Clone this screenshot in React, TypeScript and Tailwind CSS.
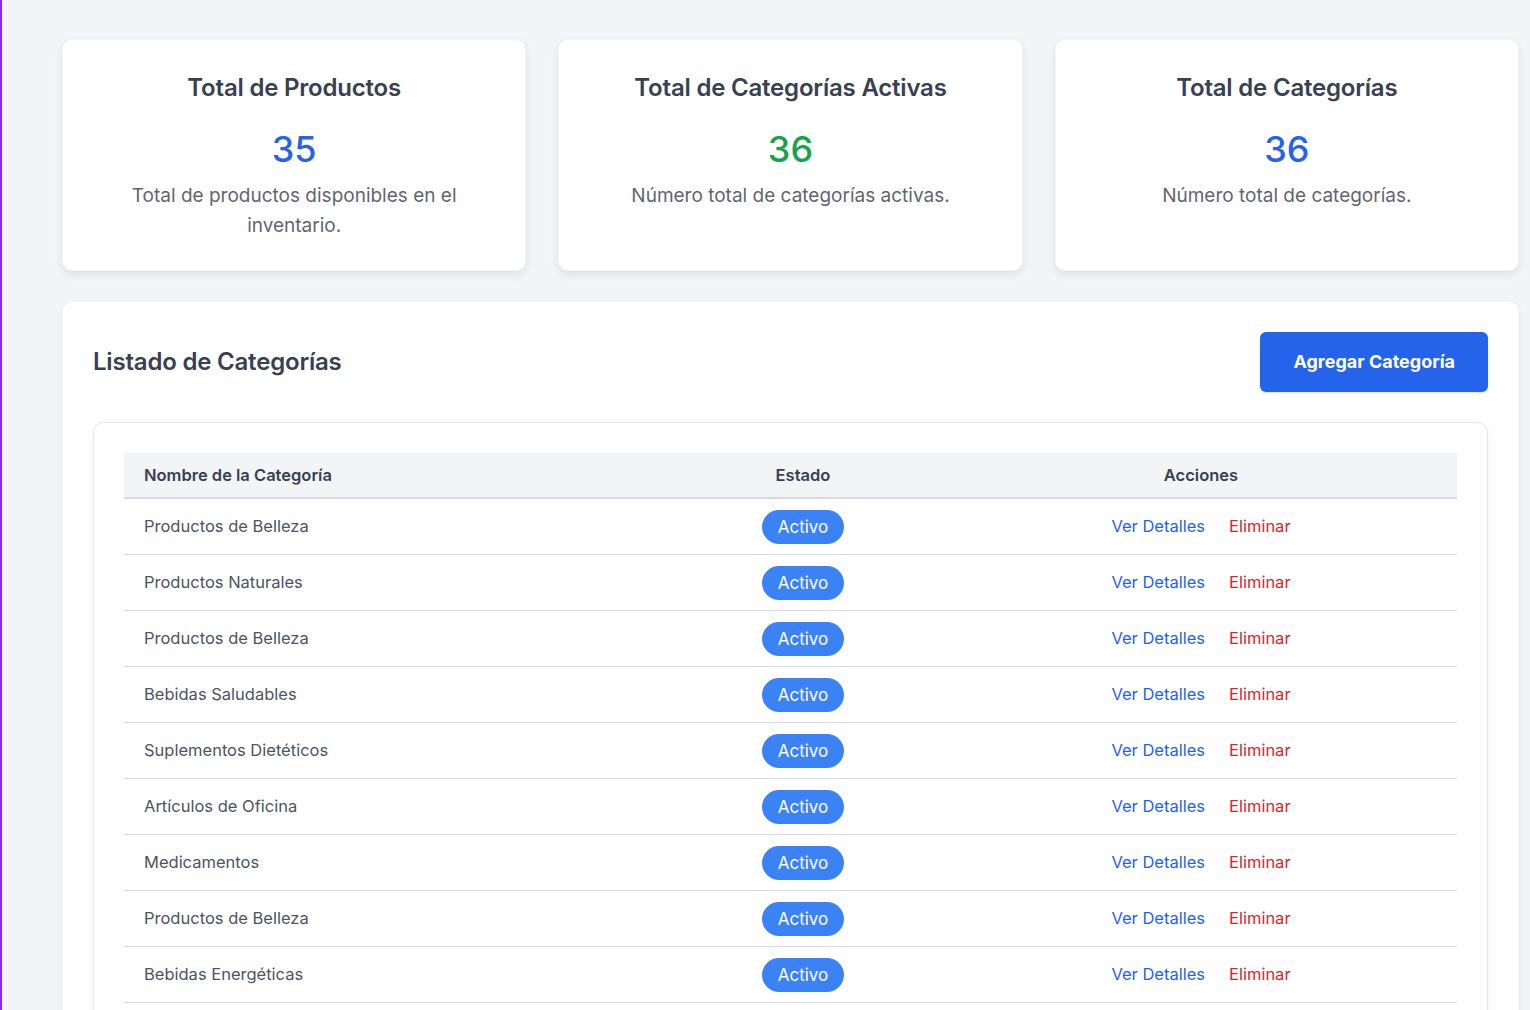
import React from "react";

const rows = [
  "Productos de Belleza",
  "Productos Naturales",
  "Productos de Belleza",
  "Bebidas Saludables",
  "Suplementos Dietéticos",
  "Artículos de Oficina",
  "Medicamentos",
  "Productos de Belleza",
  "Bebidas Energéticas",
];

function StatCard({ title, value, color, desc }: { title: string; value: string; color: string; desc: string }) {
  return (
    <div className="bg-white rounded-[10px] shadow-[0_4px_10px_rgba(0,0,0,0.08)] border border-gray-100 px-[34px] pt-[32px] pb-[29px] text-center">
      <h2 className="text-[24px] leading-[32px] font-semibold text-[#374151] tracking-[-0.2px]">{title}</h2>
      <div className={`mt-[23px] text-[36px] leading-[44px] font-medium ${color}`}>{value}</div>
      <p className="mt-[10px] text-[19px] leading-[30px] text-[#5f6672]">{desc}</p>
    </div>
  );
}

export default function App() {
  return (
    <div
      className="min-h-screen bg-[#f3f4f6] border-l-2 border-[#8a2be2] pl-[60px] pr-[11px] pt-[39px] pb-10"
      style={{ fontFamily: "Inter, 'Noto Sans', sans-serif" }}
    >
      <div className="grid grid-cols-3 gap-[32px]">
        <StatCard title="Total de Productos" value="35" color="text-[#2563eb]" desc="Total de productos disponibles en el inventario." />
        <StatCard title="Total de Categorías Activas" value="36" color="text-[#16a34a]" desc="Número total de categorías activas." />
        <StatCard title="Total de Categorías" value="36" color="text-[#2563eb]" desc="Número total de categorías." />
      </div>

      <div className="mt-[30px] bg-white rounded-[10px] border border-gray-100 shadow-[0_4px_10px_rgba(0,0,0,0.06)] p-[30px]">
        <div className="flex items-center justify-between">
          <h2 className="text-[24px] leading-[32px] font-semibold text-[#374151] tracking-[-0.2px]">Listado de Categorías</h2>
          <button className="bg-[#2563eb] text-white rounded-[6px] px-[33px] py-4 text-[18px] leading-[28px] font-bold shadow-sm">
            Agregar Categoría
          </button>
        </div>

        <div className="mt-[30px] border border-gray-200 rounded-[10px] shadow-[0_4px_12px_rgba(0,0,0,0.05)] p-[30px]">
          <div className="grid grid-cols-[537px_284px_1fr] bg-[#f3f4f6] border-b-2 border-[#d9dbe1] h-[46px] items-center text-[16.5px] font-semibold text-[#374151]">
            <div className="pl-5">Nombre de la Categoría</div>
            <div className="text-center">Estado</div>
            <div className="text-center">Acciones</div>
          </div>
          {rows.map((r, i) => (
            <div
              key={i}
              className="grid grid-cols-[537px_284px_1fr] h-[56px] items-center border-b border-[#d9dbe1] text-[16.5px]"
            >
              <div className="pl-5 text-[#4b5563]">{r}</div>
              <div className="flex justify-center">
                <span className="bg-[#3b82f6] text-white rounded-full px-4 py-1 text-[17px] leading-[26px]">Activo</span>
              </div>
              <div className="flex justify-center gap-6">
                <a className="text-[#2563eb] cursor-pointer">Ver Detalles</a>
                <a className="text-[#dc2626] cursor-pointer">Eliminar</a>
              </div>
            </div>
          ))}
        </div>
      </div>
    </div>
  );
}
